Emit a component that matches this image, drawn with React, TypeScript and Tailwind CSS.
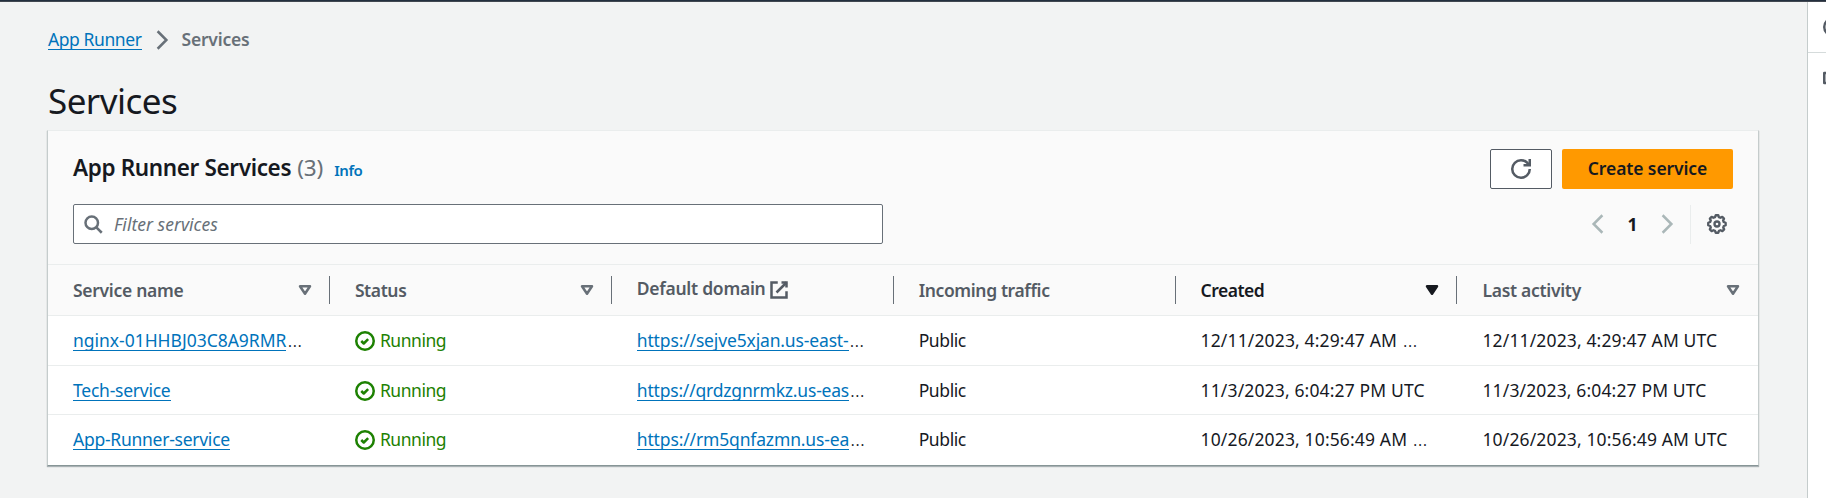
import type { ReactNode } from "react";

const link = "border-b border-[#0073bb] text-[#0073bb] leading-[20px] inline-block";

type Column = { label: ReactNode; sort?: "idle" | "active"; tracking: string };

function ExternalIcon() {
  return (
    <svg width="20" height="20" viewBox="0 0 16 16" fill="none" stroke="currentColor" strokeWidth="2" className="ml-[4px] shrink-0">
      <path d="M10 2h4v4" />
      <path d="M6 10l8-8" />
      <path d="M14 9.05V14H2V2h5" />
    </svg>
  );
}

function SortIcon({ active }: { active: boolean }) {
  return (
    <svg width="20" height="20" viewBox="0 0 16 16" stroke="currentColor" strokeWidth="2" strokeLinejoin="round" className={active ? "shrink-0 text-[#16191f]" : "shrink-0 text-[#687078]"}>
      <path d="M4 5h8l-4 6z" fill={active ? "currentColor" : "none"} />
    </svg>
  );
}

function StatusIcon() {
  return (
    <svg width="20" height="20" viewBox="0 0 16 16" fill="none" stroke="currentColor" strokeWidth="2" strokeLinejoin="round" className="mt-[2px] shrink-0">
      <circle cx="8" cy="8" r="7" />
      <path d="M5 8l2 2 3.521-3.521" />
    </svg>
  );
}

function Chevron({ dir }: { dir: "left" | "right" }) {
  return (
    <svg width="20" height="20" viewBox="0 0 16 16" fill="none" stroke="currentColor" strokeWidth="2" className="shrink-0">
      <path d={dir === "left" ? "M11.5 1L4.5 8l7 7" : "M4.5 1l7 7-7 7"} />
    </svg>
  );
}

function More() {
  return <span className="ml-px text-[20px] leading-none font-light">…</span>;
}

const columns: Column[] = [
  { label: "Service name", sort: "idle", tracking: "tracking-[-0.3px]" },
  { label: "Status", sort: "idle", tracking: "tracking-[-0.4px]" },
  { label: "Default domain", tracking: "tracking-[-0.27px]" },
  { label: "Incoming traffic", tracking: "tracking-[-0.38px]" },
  { label: "Created", sort: "active", tracking: "tracking-[-0.5px]" },
  { label: "Last activity", sort: "idle", tracking: "tracking-[-0.3px]" },
];

const rows = [
  { name: "nginx-01HHBJ03C8A9RMR", nameTracking: "tracking-[-0.02px]", more: true, url: "https://sejve5xjan.us-east-", urlTracking: "tracking-[-0.15px]", created: "12/11/2023, 4:29:47 AM ", createdMore: true, activity: "12/11/2023, 4:29:47 AM UTC", height: "h-[50px] pb-[1px]" },
  { name: "Tech-service", nameTracking: "tracking-[-0.24px]", more: false, url: "https://qrdzgnrmkz.us-eas", urlTracking: "tracking-[-0.2px]", created: "11/3/2023, 6:04:27 PM UTC", createdMore: false, activity: "11/3/2023, 6:04:27 PM UTC", height: "h-[49px] pb-[1px]" },
  { name: "App-Runner-service", nameTracking: "tracking-[-0.26px]", more: false, url: "https://rm5qnfazmn.us-ea", urlTracking: "tracking-[-0.15px]", created: "10/26/2023, 10:56:49 AM ", createdMore: true, activity: "10/26/2023, 10:56:49 AM UTC", height: "h-[49px] pb-[1px]" },
];

const grid = "grid grid-cols-[281.9px_281.9px_281.9px_281.9px_281.9px_1fr]";

export default function App() {
  return (
    <div className="flex h-[498px] w-[1826px] flex-col overflow-hidden bg-[#f2f3f3] font-['Noto_Sans',sans-serif] text-[17.5px] leading-[24px] whitespace-nowrap text-[#16191f]">
      <div className="h-[2px] shrink-0 border-b border-[#414750] bg-[#232f3e]" />
      <div className="flex min-h-0 flex-1">
        <main className="w-[1807px] shrink-0 pl-[47px]">
          <nav className="flex h-[56px] items-center pt-[20px] pl-px">
            <a className={`${link} -mt-px tracking-[-0.42px]`}>App Runner</a>
            <span className="mx-[10px] text-[#687078]"><Chevron dir="right" /></span>
            <span className="-mt-[2px] font-semibold tracking-[-0.2px] text-[#687078]">Services</span>
          </nav>
          <h1 className="mt-[20px] h-[52px] pl-px text-[35px] leading-[46px] tracking-[-0.55px]">Services</h1>

          <section className="h-[336px] w-[1712px] border-x border-t border-b border-x-[#c5cccc] border-t-[#eaeded] border-b-[#879596] bg-white shadow-[0_1px_1px_0_rgba(0,28,36,0.3)]">
            <header className="h-[134px] border-b border-[#eaeded] bg-[#fafafa] px-[25px] pt-[18px]">
              <div className="flex h-[40px] items-center">
                <h2 className="-mt-[2px] text-[22.5px] leading-[28px] font-semibold tracking-[-0.36px]">App Runner Services</h2>
                <span className="-mt-[2px] ml-[6px] text-[22.5px] tracking-[-0.1px] text-[#687078]">(3)</span>
                <a className="mt-[2px] ml-[11px] text-[15px] font-semibold tracking-[-0.45px] text-[#0073bb]">Info</a>
                <button className="ml-auto flex h-[40px] w-[62px] items-center justify-center rounded-[2px] border border-[#545b64] bg-white text-[#545b64]">
                  <svg width="20" height="20" viewBox="0 0 16 16" fill="none" stroke="currentColor" strokeWidth="2">
                    <path d="M10 5h5V0" />
                    <path d="M15 8a6.957 6.957 0 0 1-7 7 6.957 6.957 0 0 1-7-7 6.957 6.957 0 0 1 7-7 6.87 6.87 0 0 1 6.3 4" />
                  </svg>
                </button>
                <button className="ml-[10px] h-[40px] w-[171px] rounded-[2px] bg-[#ff9900] pb-[2px] font-semibold tracking-[-0.1px]">Create service</button>
              </div>
              <div className="mt-[15px] flex h-[40px] items-center">
                <div className="flex h-[40px] w-[810px] items-center rounded-[2px] border border-[#687078] bg-white pl-[9px] text-[#687078]">
                  <svg width="20" height="20" viewBox="0 0 16 16" fill="none" stroke="currentColor" strokeWidth="2">
                    <circle cx="7" cy="7" r="5" />
                    <path d="M15 15l-4.5-4.5" />
                  </svg>
                  <span className="-mt-px ml-[11px] tracking-[0.02px] italic">Filter services</span>
                </div>
                <div className="ml-auto flex items-center text-[#aab7b8]">
                  <Chevron dir="left" />
                  <span className="w-[49px] text-center font-bold text-[#16191f]">1</span>
                  <Chevron dir="right" />
                </div>
                <span className="mr-[16px] ml-[13px] h-[39px] w-px bg-[#eaeded]" />
                <svg width="20" height="20" viewBox="0 0 16 16" fill="none" stroke="#545b64" strokeWidth="1.9" strokeLinejoin="round" className="mr-[6px]">
                  <path d="M14.9 9V7l-1.5-.6-.5-1.2.7-1.5-1.4-1.4-1.5.7-1.2-.5L9 1H7l-.6 1.5-1.2.5-1.5-.7-1.4 1.4.7 1.5-.5 1.2L1 7v2l1.5.6.5 1.2-.7 1.5 1.4 1.4 1.5-.7 1.2.5L7 15h2l.6-1.5 1.2-.5 1.5.7 1.4-1.4-.7-1.5.5-1.2z" />
                  <circle cx="8" cy="8" r="2" />
                </svg>
              </div>
            </header>

            <div className={`${grid} h-[51px] border-b border-[#eaeded] bg-[#fafafa]`}>
              {columns.map((c, i) => (
                <div key={i} className={`flex items-center ${i === 5 ? "pr-[15px]" : "pr-0"} pl-[25px] font-semibold ${c.sort === "active" ? "text-[#16191f]" : "text-[#545b64]"}`}>
                  <span className={i === 2 ? `-mt-[4px] ${c.tracking}` : c.tracking}>{c.label}</span>
                  {i === 2 && <ExternalIcon />}
                  <span className="ml-auto flex items-center">
                    {c.sort && <SortIcon active={c.sort === "active"} />}
                    {i < 5 && <span className="ml-[14px] h-[28px] w-px bg-[#687078]" />}
                  </span>
                </div>
              ))}
            </div>

            {rows.map((r, i) => (
              <div key={r.name} className={`${grid} ${r.height} items-center ${i < 2 ? "border-b border-[#eaeded]" : ""} [&>div]:pl-[25px]`}>
                <div>
                  <a className={`${link} ${r.nameTracking}`}>{r.name}</a>
                  {r.more && <More />}
                </div>
                <div className="flex items-center text-[#1d8102]">
                  <StatusIcon />
                  <span className="ml-[5px] tracking-[-0.45px]">Running</span>
                </div>
                <div><a className={`${link} ${r.urlTracking}`}>{r.url}</a><More /></div>
                <div className="tracking-[-0.4px]">Public</div>
                <div className="tracking-[0.14px] whitespace-pre">{r.created}{r.createdMore && <More />}</div>
                <div className="tracking-[0.14px]">{r.activity}</div>
              </div>
            ))}
          </section>
        </main>
        <aside className="flex-1 overflow-hidden border-l border-[#c5cccc] bg-white text-[#545b64]">
          <div className="flex h-[51px] items-center border-b border-[#d5dbdb] pl-[15px]">
            <svg width="20" height="20" viewBox="0 0 16 16" fill="none" stroke="currentColor" strokeWidth="2" className="shrink-0">
              <circle cx="8" cy="8" r="7" />
            </svg>
          </div>
          <div className="mt-[15px] pl-[15px]">
            <svg width="20" height="20" viewBox="0 0 16 16" fill="none" stroke="currentColor" strokeWidth="2" strokeLinejoin="round">
              <path d="M1 4h14v8H1z" />
            </svg>
          </div>
        </aside>
      </div>
    </div>
  );
}
